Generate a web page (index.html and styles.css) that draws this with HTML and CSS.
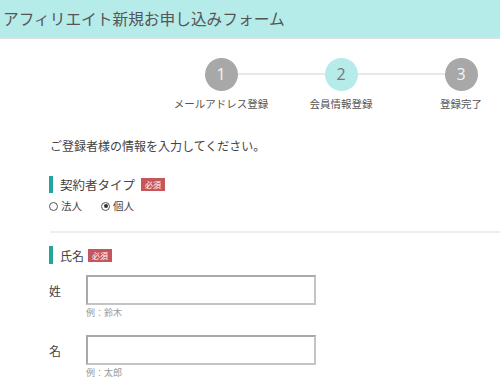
FILE: index.html
```html
<!DOCTYPE html>
<html lang="ja">
<head>
<meta charset="utf-8">
<title>アフィリエイト新規お申し込みフォーム</title>
<link rel="stylesheet" href="styles.css">
</head>
<body>
<header class="page-header">アフィリエイト新規お申し込みフォーム</header>
<main class="main">
  <ol class="steps">
    <li class="step"><span class="step-num">1</span><span class="step-label">メールアドレス登録</span></li>
    <li class="step step-active"><span class="step-num">2</span><span class="step-label">会員情報登録</span></li>
    <li class="step"><span class="step-num">3</span><span class="step-label">登録完了</span></li>
  </ol>
  <p class="intro">ご登録者様の情報を入力してください。</p>

  <section class="section">
    <h2 class="sec-title">契約者タイプ<span class="badge">必須</span></h2>
    <div class="radios">
      <label class="radio"><input type="radio" name="type">法人</label>
      <label class="radio"><input type="radio" name="type" checked>個人</label>
    </div>
  </section>

  <div class="divider"></div>

  <section class="section">
    <h2 class="sec-title sec-title-2">氏名<span class="badge">必須</span></h2>
    <div class="field">
      <label class="field-label">姓</label>
      <input class="text-input" type="text">
    </div>
    <div class="hint">例：鈴木</div>
    <div class="field field-2">
      <label class="field-label">名</label>
      <input class="text-input" type="text">
    </div>
    <div class="hint">例：太郎</div>
  </section>
</main>
</body>
</html>
```
FILE: styles.css
```css
* { box-sizing: border-box; }
html, body { margin: 0; padding: 0; background: #fff; }
body {
  font-family: "Noto Sans CJK JP", "Noto Sans", sans-serif;
  color: #444;
  width: 500px;
  height: 390px;
  overflow: hidden;
}
.page-header {
  height: 39px;
  line-height: 37px;
  background: #b5ebe9;
  border-bottom: 2px solid #dedede;
  padding-left: 3px;
  font-size: 15.7px;
  color: #555;
}
.main {
  padding-left: 49px;
}
.steps {
  list-style: none;
  margin: 0;
  padding: 19px 0 0 134px;
  display: flex;
  gap: 44px;
}
.step {
  position: relative;
  flex: 0 0 76px;
  width: 76px;
  display: flex;
  flex-direction: column;
  align-items: center;
}
.step + .step::before {
  content: "";
  position: absolute;
  top: 15px;
  left: -82px;
  width: 120px;
  height: 2px;
  background: #e8e8e8;
  z-index: 0;
}
.step-num {
  position: relative;
  z-index: 1;
  width: 33px;
  height: 33px;
  border-radius: 50%;
  background: #a8a8a8;
  color: #f4f4f4;
  font-size: 16px;
  line-height: 33px;
  text-align: center;
  font-family: "Open Sans", "Noto Sans", sans-serif;
}
.step-active .step-num {
  background: #b5ebe9;
  color: #777;
}
.step-label {
  margin-top: 6px;
  font-size: 10.5px;
  line-height: 14px;
  color: #555;
  white-space: nowrap;
}
.intro {
  margin: 26px 0 0 1px;
  font-size: 12px;
  line-height: 18px;
  color: #444;
}
.sec-title {
  margin: 21px 0 0;
  display: flex;
  align-items: center;
  height: 17px;
  border-left: 4px solid #22a59f;
  padding-left: 7px;
  font-size: 12.5px;
  font-weight: normal;
  color: #444;
}
.badge {
  margin-left: 6px;
  background: #c6565c;
  color: #fff;
  font-size: 8px;
  line-height: 13px;
  height: 13px;
  padding: 0 4px;
}
.radios {
  margin-top: 5px;
  display: flex;
  gap: 19px;
  font-size: 10.5px;
  line-height: 16px;
}
.radio {
  display: flex;
  align-items: center;
  gap: 3px;
}
.radio input {
  appearance: none;
  -webkit-appearance: none;
  margin: 0;
  width: 9px;
  height: 9px;
  border: 1px solid #555;
  border-radius: 50%;
  position: relative;
}
.radio input:checked::after {
  content: "";
  position: absolute;
  left: 1.5px;
  top: 1.5px;
  width: 4px;
  height: 4px;
  border-radius: 50%;
  background: #333;
}
.divider {
  margin-top: 17px;
  margin-left: 1px;
  height: 2px;
  background: #eeeeee;
}
.sec-title-2 {
  margin-top: 13px;
  height: 18px;
  font-size: 12px;
}
.sec-title-2 .badge { margin-left: 4px; }
.field {
  margin-top: 11px;
  display: flex;
  align-items: center;
}
.field-2 { margin-top: 16px; }
.field-label {
  width: 37px;
  font-size: 12px;
  color: #444;
}
.text-input {
  width: 230px;
  height: 30px;
  border: 2px solid #a9a9a9;
  border-right-color: #c4c4c4;
  border-bottom-color: #c4c4c4;
  margin: 0;
  padding: 0 4px;
  background: #fff;
}
.hint {
  margin: 2px 0 0 37px;
  font-size: 9px;
  line-height: 12px;
  color: #999;
}
```
